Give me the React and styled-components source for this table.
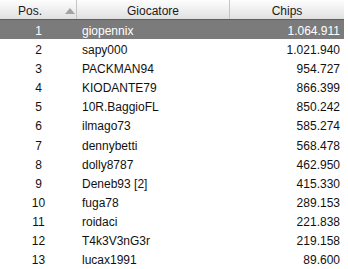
import React from "react";
import styled, { createGlobalStyle } from "styled-components";

const Global = createGlobalStyle`
  html, body { margin: 0; padding: 0; background: #ffffff; }
  body { font-family: "Liberation Sans", Arial, sans-serif; font-size: 12px; }
`;

const Table = styled.div`
  width: 344px;
  display: flex;
  flex-direction: column;
  background: #ffffff;
`;

const Grid = styled.div`
  display: grid;
  grid-template-columns: 77px 153px 114px;
`;

const Header = styled(Grid)`
  height: 19px;
  background: linear-gradient(#fdfdfd 0%, #f1f1f1 45%, #e0e0e0 100%);
  border-bottom: 1px solid #5e5e5e;
`;

const HeadCell = styled.div`
  display: flex;
  align-items: center;
  justify-content: center;
  position: relative;
  color: #1a1a1a;
  border-right: ${(p) => (p.$last ? "none" : "1px solid #c4c4c4")};
  padding-top: 2px;
  box-sizing: border-box;
`;

const HeadLabel = styled.span`
  padding-right: ${(p) => (p.$shift ? "16px" : "0")};
`;

const SortArrow = styled.span`
  position: absolute;
  right: 1px;
  top: 8px;
  width: 0;
  height: 0;
  border-left: 5px solid transparent;
  border-right: 5px solid transparent;
  border-bottom: 6px solid #a3a3a3;
`;

const Row = styled(Grid)`
  height: 19.08px;
  background: ${(p) => (p.$selected ? "#7b7b7b" : "#ffffff")};
  color: ${(p) => (p.$selected ? "#ffffff" : "#111111")};
`;

const Cell = styled.div`
  display: flex;
  align-items: center;
  box-sizing: border-box;
  justify-content: ${(p) =>
    p.$align === "right" ? "flex-end" : p.$align === "center" ? "center" : "flex-start"};
  padding: ${(p) =>
    p.$align === "right" ? "3px 4px 0 0" : p.$align === "left" ? "3px 0 0 5px" : "3px 0 0 0"};
  white-space: nowrap;
`;

const rows = [
  ["1", "giopennix", "1.064.911"],
  ["2", "sapy000", "1.021.940"],
  ["3", "PACKMAN94", "954.727"],
  ["4", "KIODANTE79", "866.399"],
  ["5", "10R.BaggioFL", "850.242"],
  ["6", "ilmago73", "585.274"],
  ["7", "dennybetti", "568.478"],
  ["8", "dolly8787", "462.950"],
  ["9", "Deneb93 [2]", "415.330"],
  ["10", "fuga78", "289.153"],
  ["11", "roidaci", "221.838"],
  ["12", "T4k3V3nG3r", "219.158"],
  ["13", "lucax1991", "89.600"],
];

export default function App() {
  return (
    <>
      <Global />
      <Table>
        <Header>
          <HeadCell>
            <HeadLabel $shift>Pos.</HeadLabel>
            <SortArrow />
          </HeadCell>
          <HeadCell>Giocatore</HeadCell>
          <HeadCell $last>Chips</HeadCell>
        </Header>
        {rows.map((r, i) => (
          <Row key={r[0]} $selected={i === 0}>
            <Cell $align="center">{r[0]}</Cell>
            <Cell $align="left">{r[1]}</Cell>
            <Cell $align="right">{r[2]}</Cell>
          </Row>
        ))}
      </Table>
    </>
  );
}
